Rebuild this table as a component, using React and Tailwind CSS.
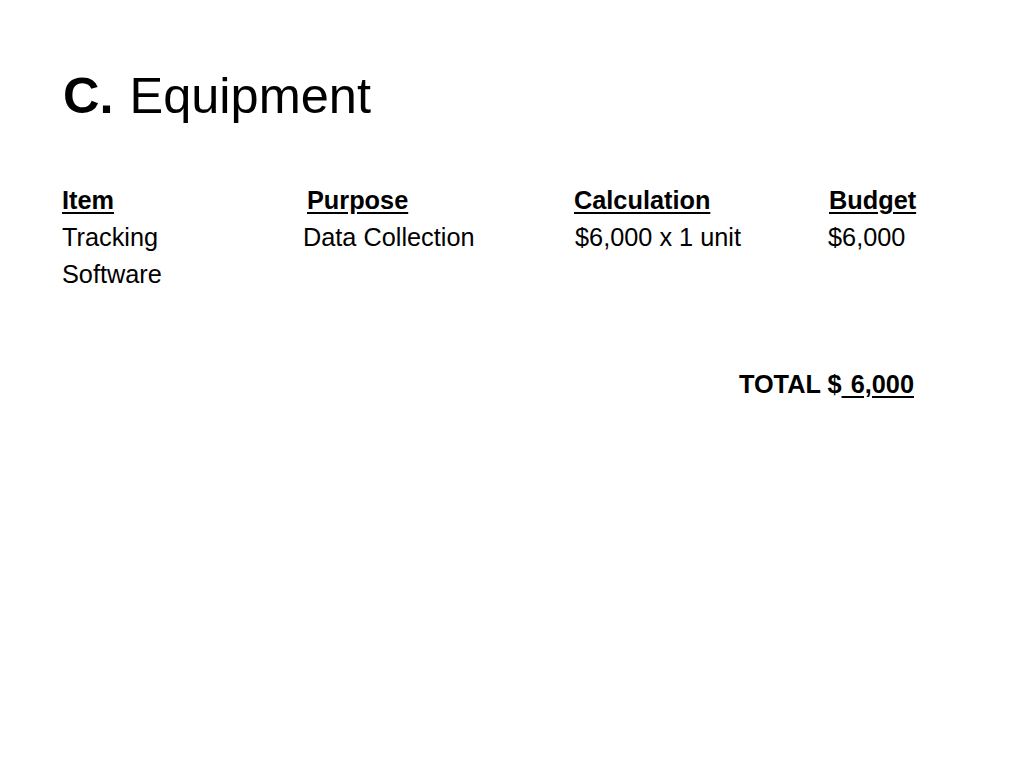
import React from "react";

const rows = [
  { item: "Tracking", purpose: "Data Collection", calc: "$6,000 x 1 unit", budget: "$6,000" },
  { item: "Software", purpose: "", calc: "", budget: "" },
];

function App() {
  return (
    <div className="min-h-screen w-[1024px] h-[768px] bg-white text-black font-['Liberation_Sans',Arial,sans-serif]">
      {/* Title */}
      <div className="pt-[71px] pl-[63px]">
        <h1 className="text-[50.5px] leading-[50px]">
          <span className="font-bold">C.</span>
          <span className="ml-[16px]">Equipment</span>
        </h1>
      </div>

      {/* Table */}
      <div className="mt-[61px] pl-[62px] text-[25.3px] leading-[37px]">
        <div className="grid grid-cols-[241px_271px_254px_120px] font-bold">
          <span><span className="underline underline-offset-[3px]">Item</span></span>
          <span className="pl-[4px]"><span className="underline underline-offset-[3px]">Purpose</span></span>
          <span><span className="underline underline-offset-[3px]">Calculation</span></span>
          <span className="pl-[1px]"><span className="underline underline-offset-[3px]">Budget</span></span>
        </div>
        {rows.map((r, i) => (
          <div key={i} className="grid grid-cols-[241px_271px_254px_120px]">
            <span>{r.item}</span>
            <span>{r.purpose}</span>
            <span className="pl-[1px]">{r.calc}</span>
            <span>{r.budget}</span>
          </div>
        ))}

        {/* Total */}
        <div className="mt-[73px] pr-[110px] text-right font-bold">
          <span>TOTAL $</span>
          <span className="underline underline-offset-[3px]">{"\u00a0\u200a6,000"}</span>
        </div>
      </div>
    </div>
  );
}

export default App;
